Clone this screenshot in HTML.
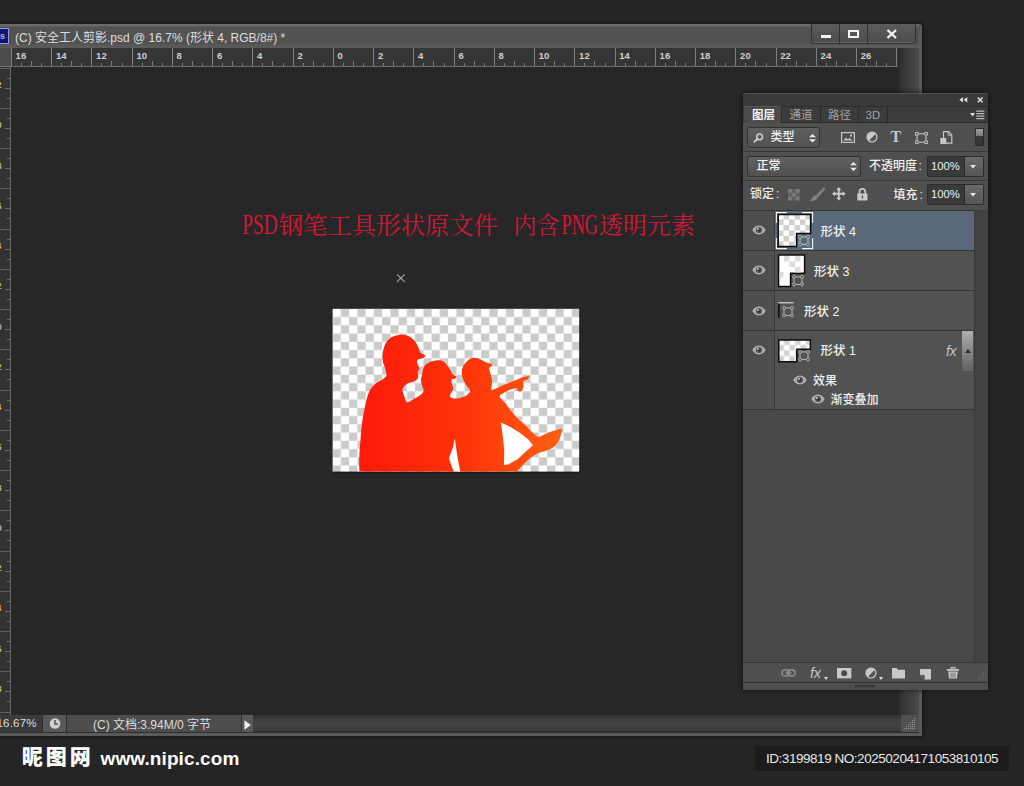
<!DOCTYPE html>
<html lang="zh-CN">
<head>
<meta charset="utf-8">
<title>安全工人剪影</title>
<style>
*{box-sizing:border-box;margin:0;padding:0}
html,body{width:1024px;height:786px;overflow:hidden;background:#252525}
body{position:relative;font-family:"Liberation Sans","Noto Sans CJK SC",sans-serif;font-size:12px;color:#dcdcdc}
.abs{position:absolute}
.t{position:absolute;white-space:nowrap;line-height:1}
svg{position:absolute;overflow:visible}
/* window */
#win{left:-4px;top:23.5px;width:926.3px;height:712.5px;background:#5a5a5a;border-radius:0 3px 0 0;box-shadow:0 0 4px 1px rgba(0,0,0,.5)}
#titlebar{left:0;top:23.5px;width:919px;height:24.5px;background:linear-gradient(#6a6a6a 0,#6a6a6a 2px,#525252 2.8px,#525252 20px,#5a5a5a 21px,#5a5a5a 100%)}
#canvas{left:11px;top:67px;width:887px;height:648px;background:#272727}
#hruler{left:0;top:48px;width:898px;height:19px;background:#353535;border-bottom:1px solid #6e6e6e;overflow:hidden}
#vruler{left:0;top:67px;width:11px;height:648px;background:#333;border-right:1px solid #666;overflow:hidden}
#rcorner{left:0;top:48px;width:11px;height:18px;background:#4a4a4a}
#vscroll{left:898px;top:48px;width:21px;height:667px;background:linear-gradient(90deg,#2c2c2c,#3a3a3a 40%,#4a4a4a)}
#status{left:0;top:715px;width:919px;height:18px;background:#3c3c3c;border-bottom:1px solid #2e2e2e}
/* panel */
#panel{left:743px;top:93px;width:245px;height:597px;background:#484848;border-radius:3px 3px 0 0}
</style>
</head>
<body>
<div id="win" class="abs"></div>
<div id="titlebar" class="abs"></div>
<div id="vscroll" class="abs"></div>
<div id="canvas" class="abs"></div>
<div id="hruler" class="abs"><i class="abs" style="left:10.8px;top:0;width:1px;height:19px;background:#7e7e7e"></i><span class="t" style="left:15.6px;top:2.8px;font-size:9.5px;font-weight:bold;color:#d0d0d0">16</span><i class="abs" style="left:20.9px;top:15px;width:1px;height:3px;background:#7c7c7c"></i><i class="abs" style="left:30.9px;top:13px;width:1px;height:5px;background:#7c7c7c"></i><i class="abs" style="left:41.0px;top:15px;width:1px;height:3px;background:#7c7c7c"></i><i class="abs" style="left:51.1px;top:0;width:1px;height:19px;background:#7e7e7e"></i><span class="t" style="left:55.9px;top:2.8px;font-size:9.5px;font-weight:bold;color:#d0d0d0">14</span><i class="abs" style="left:61.1px;top:15px;width:1px;height:3px;background:#7c7c7c"></i><i class="abs" style="left:71.2px;top:13px;width:1px;height:5px;background:#7c7c7c"></i><i class="abs" style="left:81.2px;top:15px;width:1px;height:3px;background:#7c7c7c"></i><i class="abs" style="left:91.3px;top:0;width:1px;height:19px;background:#7e7e7e"></i><span class="t" style="left:96.1px;top:2.8px;font-size:9.5px;font-weight:bold;color:#d0d0d0">12</span><i class="abs" style="left:101.4px;top:15px;width:1px;height:3px;background:#7c7c7c"></i><i class="abs" style="left:111.4px;top:13px;width:1px;height:5px;background:#7c7c7c"></i><i class="abs" style="left:121.5px;top:15px;width:1px;height:3px;background:#7c7c7c"></i><i class="abs" style="left:131.6px;top:0;width:1px;height:19px;background:#7e7e7e"></i><span class="t" style="left:136.4px;top:2.8px;font-size:9.5px;font-weight:bold;color:#d0d0d0">10</span><i class="abs" style="left:141.6px;top:15px;width:1px;height:3px;background:#7c7c7c"></i><i class="abs" style="left:151.7px;top:13px;width:1px;height:5px;background:#7c7c7c"></i><i class="abs" style="left:161.7px;top:15px;width:1px;height:3px;background:#7c7c7c"></i><i class="abs" style="left:171.8px;top:0;width:1px;height:19px;background:#7e7e7e"></i><span class="t" style="left:176.6px;top:2.8px;font-size:9.5px;font-weight:bold;color:#d0d0d0">8</span><i class="abs" style="left:181.9px;top:15px;width:1px;height:3px;background:#7c7c7c"></i><i class="abs" style="left:191.9px;top:13px;width:1px;height:5px;background:#7c7c7c"></i><i class="abs" style="left:202.0px;top:15px;width:1px;height:3px;background:#7c7c7c"></i><i class="abs" style="left:212.1px;top:0;width:1px;height:19px;background:#7e7e7e"></i><span class="t" style="left:216.9px;top:2.8px;font-size:9.5px;font-weight:bold;color:#d0d0d0">6</span><i class="abs" style="left:222.1px;top:15px;width:1px;height:3px;background:#7c7c7c"></i><i class="abs" style="left:232.2px;top:13px;width:1px;height:5px;background:#7c7c7c"></i><i class="abs" style="left:242.2px;top:15px;width:1px;height:3px;background:#7c7c7c"></i><i class="abs" style="left:252.3px;top:0;width:1px;height:19px;background:#7e7e7e"></i><span class="t" style="left:257.1px;top:2.8px;font-size:9.5px;font-weight:bold;color:#d0d0d0">4</span><i class="abs" style="left:262.4px;top:15px;width:1px;height:3px;background:#7c7c7c"></i><i class="abs" style="left:272.4px;top:13px;width:1px;height:5px;background:#7c7c7c"></i><i class="abs" style="left:282.5px;top:15px;width:1px;height:3px;background:#7c7c7c"></i><i class="abs" style="left:292.6px;top:0;width:1px;height:19px;background:#7e7e7e"></i><span class="t" style="left:297.4px;top:2.8px;font-size:9.5px;font-weight:bold;color:#d0d0d0">2</span><i class="abs" style="left:302.6px;top:15px;width:1px;height:3px;background:#7c7c7c"></i><i class="abs" style="left:312.7px;top:13px;width:1px;height:5px;background:#7c7c7c"></i><i class="abs" style="left:322.7px;top:15px;width:1px;height:3px;background:#7c7c7c"></i><i class="abs" style="left:332.8px;top:0;width:1px;height:19px;background:#7e7e7e"></i><span class="t" style="left:337.6px;top:2.8px;font-size:9.5px;font-weight:bold;color:#d0d0d0">0</span><i class="abs" style="left:342.9px;top:15px;width:1px;height:3px;background:#7c7c7c"></i><i class="abs" style="left:352.9px;top:13px;width:1px;height:5px;background:#7c7c7c"></i><i class="abs" style="left:363.0px;top:15px;width:1px;height:3px;background:#7c7c7c"></i><i class="abs" style="left:373.1px;top:0;width:1px;height:19px;background:#7e7e7e"></i><span class="t" style="left:377.9px;top:2.8px;font-size:9.5px;font-weight:bold;color:#d0d0d0">2</span><i class="abs" style="left:383.1px;top:15px;width:1px;height:3px;background:#7c7c7c"></i><i class="abs" style="left:393.2px;top:13px;width:1px;height:5px;background:#7c7c7c"></i><i class="abs" style="left:403.2px;top:15px;width:1px;height:3px;background:#7c7c7c"></i><i class="abs" style="left:413.3px;top:0;width:1px;height:19px;background:#7e7e7e"></i><span class="t" style="left:418.1px;top:2.8px;font-size:9.5px;font-weight:bold;color:#d0d0d0">4</span><i class="abs" style="left:423.4px;top:15px;width:1px;height:3px;background:#7c7c7c"></i><i class="abs" style="left:433.4px;top:13px;width:1px;height:5px;background:#7c7c7c"></i><i class="abs" style="left:443.5px;top:15px;width:1px;height:3px;background:#7c7c7c"></i><i class="abs" style="left:453.6px;top:0;width:1px;height:19px;background:#7e7e7e"></i><span class="t" style="left:458.4px;top:2.8px;font-size:9.5px;font-weight:bold;color:#d0d0d0">6</span><i class="abs" style="left:463.6px;top:15px;width:1px;height:3px;background:#7c7c7c"></i><i class="abs" style="left:473.7px;top:13px;width:1px;height:5px;background:#7c7c7c"></i><i class="abs" style="left:483.7px;top:15px;width:1px;height:3px;background:#7c7c7c"></i><i class="abs" style="left:493.8px;top:0;width:1px;height:19px;background:#7e7e7e"></i><span class="t" style="left:498.6px;top:2.8px;font-size:9.5px;font-weight:bold;color:#d0d0d0">8</span><i class="abs" style="left:503.9px;top:15px;width:1px;height:3px;background:#7c7c7c"></i><i class="abs" style="left:513.9px;top:13px;width:1px;height:5px;background:#7c7c7c"></i><i class="abs" style="left:524.0px;top:15px;width:1px;height:3px;background:#7c7c7c"></i><i class="abs" style="left:534.0px;top:0;width:1px;height:19px;background:#7e7e7e"></i><span class="t" style="left:538.8px;top:2.8px;font-size:9.5px;font-weight:bold;color:#d0d0d0">10</span><i class="abs" style="left:544.1px;top:15px;width:1px;height:3px;background:#7c7c7c"></i><i class="abs" style="left:554.2px;top:13px;width:1px;height:5px;background:#7c7c7c"></i><i class="abs" style="left:564.2px;top:15px;width:1px;height:3px;background:#7c7c7c"></i><i class="abs" style="left:574.3px;top:0;width:1px;height:19px;background:#7e7e7e"></i><span class="t" style="left:579.1px;top:2.8px;font-size:9.5px;font-weight:bold;color:#d0d0d0">12</span><i class="abs" style="left:584.4px;top:15px;width:1px;height:3px;background:#7c7c7c"></i><i class="abs" style="left:594.4px;top:13px;width:1px;height:5px;background:#7c7c7c"></i><i class="abs" style="left:604.5px;top:15px;width:1px;height:3px;background:#7c7c7c"></i><i class="abs" style="left:614.5px;top:0;width:1px;height:19px;background:#7e7e7e"></i><span class="t" style="left:619.3px;top:2.8px;font-size:9.5px;font-weight:bold;color:#d0d0d0">14</span><i class="abs" style="left:624.6px;top:15px;width:1px;height:3px;background:#7c7c7c"></i><i class="abs" style="left:634.7px;top:13px;width:1px;height:5px;background:#7c7c7c"></i><i class="abs" style="left:644.7px;top:15px;width:1px;height:3px;background:#7c7c7c"></i><i class="abs" style="left:654.8px;top:0;width:1px;height:19px;background:#7e7e7e"></i><span class="t" style="left:659.6px;top:2.8px;font-size:9.5px;font-weight:bold;color:#d0d0d0">16</span><i class="abs" style="left:664.9px;top:15px;width:1px;height:3px;background:#7c7c7c"></i><i class="abs" style="left:674.9px;top:13px;width:1px;height:5px;background:#7c7c7c"></i><i class="abs" style="left:685.0px;top:15px;width:1px;height:3px;background:#7c7c7c"></i><i class="abs" style="left:695.0px;top:0;width:1px;height:19px;background:#7e7e7e"></i><span class="t" style="left:699.8px;top:2.8px;font-size:9.5px;font-weight:bold;color:#d0d0d0">18</span><i class="abs" style="left:705.1px;top:15px;width:1px;height:3px;background:#7c7c7c"></i><i class="abs" style="left:715.2px;top:13px;width:1px;height:5px;background:#7c7c7c"></i><i class="abs" style="left:725.2px;top:15px;width:1px;height:3px;background:#7c7c7c"></i><i class="abs" style="left:735.3px;top:0;width:1px;height:19px;background:#7e7e7e"></i><span class="t" style="left:740.1px;top:2.8px;font-size:9.5px;font-weight:bold;color:#d0d0d0">20</span><i class="abs" style="left:745.4px;top:15px;width:1px;height:3px;background:#7c7c7c"></i><i class="abs" style="left:755.4px;top:13px;width:1px;height:5px;background:#7c7c7c"></i><i class="abs" style="left:765.5px;top:15px;width:1px;height:3px;background:#7c7c7c"></i><i class="abs" style="left:775.5px;top:0;width:1px;height:19px;background:#7e7e7e"></i><span class="t" style="left:780.3px;top:2.8px;font-size:9.5px;font-weight:bold;color:#d0d0d0">22</span><i class="abs" style="left:785.6px;top:15px;width:1px;height:3px;background:#7c7c7c"></i><i class="abs" style="left:795.7px;top:13px;width:1px;height:5px;background:#7c7c7c"></i><i class="abs" style="left:805.7px;top:15px;width:1px;height:3px;background:#7c7c7c"></i><i class="abs" style="left:815.8px;top:0;width:1px;height:19px;background:#7e7e7e"></i><span class="t" style="left:820.6px;top:2.8px;font-size:9.5px;font-weight:bold;color:#d0d0d0">24</span><i class="abs" style="left:825.9px;top:15px;width:1px;height:3px;background:#7c7c7c"></i><i class="abs" style="left:835.9px;top:13px;width:1px;height:5px;background:#7c7c7c"></i><i class="abs" style="left:846.0px;top:15px;width:1px;height:3px;background:#7c7c7c"></i><i class="abs" style="left:856.0px;top:0;width:1px;height:19px;background:#7e7e7e"></i><span class="t" style="left:860.8px;top:2.8px;font-size:9.5px;font-weight:bold;color:#d0d0d0">26</span><i class="abs" style="left:866.1px;top:15px;width:1px;height:3px;background:#7c7c7c"></i><i class="abs" style="left:876.2px;top:13px;width:1px;height:5px;background:#7c7c7c"></i><i class="abs" style="left:886.2px;top:15px;width:1px;height:3px;background:#7c7c7c"></i><i class="abs" style="left:896.3px;top:0;width:1px;height:19px;background:#7e7e7e"></i><span class="t" style="left:901.1px;top:2.8px;font-size:9.5px;font-weight:bold;color:#d0d0d0">28</span></div>
<div id="vruler" class="abs"><i class="abs" style="left:0;top:0.5px;width:11px;height:1px;background:#626262"></i><span class="t" style="right:8.5px;top:14.0px;font-size:9px;color:#e8e0c0">12</span><i class="abs" style="left:7px;top:10.6px;width:3px;height:1px;background:#6a6a6a"></i><i class="abs" style="left:5px;top:20.6px;width:5px;height:1px;background:#6a6a6a"></i><i class="abs" style="left:7px;top:30.7px;width:3px;height:1px;background:#6a6a6a"></i><i class="abs" style="left:0;top:40.8px;width:11px;height:1px;background:#626262"></i><span class="t" style="right:8.5px;top:54.2px;font-size:9px;color:#e8e0c0">10</span><i class="abs" style="left:7px;top:50.8px;width:3px;height:1px;background:#6a6a6a"></i><i class="abs" style="left:5px;top:60.9px;width:5px;height:1px;background:#6a6a6a"></i><i class="abs" style="left:7px;top:70.9px;width:3px;height:1px;background:#6a6a6a"></i><i class="abs" style="left:0;top:81.0px;width:11px;height:1px;background:#626262"></i><span class="t" style="right:8.5px;top:94.5px;font-size:9px;color:#e8e0c0">8</span><i class="abs" style="left:7px;top:91.1px;width:3px;height:1px;background:#6a6a6a"></i><i class="abs" style="left:5px;top:101.1px;width:5px;height:1px;background:#6a6a6a"></i><i class="abs" style="left:7px;top:111.2px;width:3px;height:1px;background:#6a6a6a"></i><i class="abs" style="left:0;top:121.2px;width:11px;height:1px;background:#626262"></i><span class="t" style="right:8.5px;top:134.8px;font-size:9px;color:#e8e0c0">6</span><i class="abs" style="left:7px;top:131.3px;width:3px;height:1px;background:#6a6a6a"></i><i class="abs" style="left:5px;top:141.4px;width:5px;height:1px;background:#6a6a6a"></i><i class="abs" style="left:7px;top:151.4px;width:3px;height:1px;background:#6a6a6a"></i><i class="abs" style="left:0;top:161.5px;width:11px;height:1px;background:#626262"></i><span class="t" style="right:8.5px;top:175.0px;font-size:9px;color:#e8e0c0">4</span><i class="abs" style="left:7px;top:171.6px;width:3px;height:1px;background:#6a6a6a"></i><i class="abs" style="left:5px;top:181.6px;width:5px;height:1px;background:#6a6a6a"></i><i class="abs" style="left:7px;top:191.7px;width:3px;height:1px;background:#6a6a6a"></i><i class="abs" style="left:0;top:201.8px;width:11px;height:1px;background:#626262"></i><span class="t" style="right:8.5px;top:215.2px;font-size:9px;color:#e8e0c0">2</span><i class="abs" style="left:7px;top:211.8px;width:3px;height:1px;background:#6a6a6a"></i><i class="abs" style="left:5px;top:221.9px;width:5px;height:1px;background:#6a6a6a"></i><i class="abs" style="left:7px;top:231.9px;width:3px;height:1px;background:#6a6a6a"></i><i class="abs" style="left:0;top:242.0px;width:11px;height:1px;background:#626262"></i><span class="t" style="right:8.5px;top:255.5px;font-size:9px;color:#e8e0c0">0</span><i class="abs" style="left:7px;top:252.1px;width:3px;height:1px;background:#6a6a6a"></i><i class="abs" style="left:5px;top:262.1px;width:5px;height:1px;background:#6a6a6a"></i><i class="abs" style="left:7px;top:272.2px;width:3px;height:1px;background:#6a6a6a"></i><i class="abs" style="left:0;top:282.2px;width:11px;height:1px;background:#626262"></i><span class="t" style="right:8.5px;top:295.8px;font-size:9px;color:#e8e0c0">2</span><i class="abs" style="left:7px;top:292.3px;width:3px;height:1px;background:#6a6a6a"></i><i class="abs" style="left:5px;top:302.4px;width:5px;height:1px;background:#6a6a6a"></i><i class="abs" style="left:7px;top:312.4px;width:3px;height:1px;background:#6a6a6a"></i><i class="abs" style="left:0;top:322.5px;width:11px;height:1px;background:#626262"></i><span class="t" style="right:8.5px;top:336.0px;font-size:9px;color:#e8e0c0">4</span><i class="abs" style="left:7px;top:332.6px;width:3px;height:1px;background:#6a6a6a"></i><i class="abs" style="left:5px;top:342.6px;width:5px;height:1px;background:#6a6a6a"></i><i class="abs" style="left:7px;top:352.7px;width:3px;height:1px;background:#6a6a6a"></i><i class="abs" style="left:0;top:362.8px;width:11px;height:1px;background:#626262"></i><span class="t" style="right:8.5px;top:376.2px;font-size:9px;color:#e8e0c0">6</span><i class="abs" style="left:7px;top:372.8px;width:3px;height:1px;background:#6a6a6a"></i><i class="abs" style="left:5px;top:382.9px;width:5px;height:1px;background:#6a6a6a"></i><i class="abs" style="left:7px;top:392.9px;width:3px;height:1px;background:#6a6a6a"></i><i class="abs" style="left:0;top:403.0px;width:11px;height:1px;background:#626262"></i><span class="t" style="right:8.5px;top:416.5px;font-size:9px;color:#e8e0c0">8</span><i class="abs" style="left:7px;top:413.1px;width:3px;height:1px;background:#6a6a6a"></i><i class="abs" style="left:5px;top:423.1px;width:5px;height:1px;background:#6a6a6a"></i><i class="abs" style="left:7px;top:433.2px;width:3px;height:1px;background:#6a6a6a"></i><i class="abs" style="left:0;top:443.2px;width:11px;height:1px;background:#626262"></i><span class="t" style="right:8.5px;top:456.8px;font-size:9px;color:#e8e0c0">10</span><i class="abs" style="left:7px;top:453.3px;width:3px;height:1px;background:#6a6a6a"></i><i class="abs" style="left:5px;top:463.4px;width:5px;height:1px;background:#6a6a6a"></i><i class="abs" style="left:7px;top:473.4px;width:3px;height:1px;background:#6a6a6a"></i><i class="abs" style="left:0;top:483.5px;width:11px;height:1px;background:#626262"></i><span class="t" style="right:8.5px;top:497.0px;font-size:9px;color:#e8e0c0">12</span><i class="abs" style="left:7px;top:493.6px;width:3px;height:1px;background:#6a6a6a"></i><i class="abs" style="left:5px;top:503.6px;width:5px;height:1px;background:#6a6a6a"></i><i class="abs" style="left:7px;top:513.7px;width:3px;height:1px;background:#6a6a6a"></i><i class="abs" style="left:0;top:523.8px;width:11px;height:1px;background:#626262"></i><span class="t" style="right:8.5px;top:537.2px;font-size:9px;color:#e8e0c0">14</span><i class="abs" style="left:7px;top:533.8px;width:3px;height:1px;background:#6a6a6a"></i><i class="abs" style="left:5px;top:543.9px;width:5px;height:1px;background:#6a6a6a"></i><i class="abs" style="left:7px;top:553.9px;width:3px;height:1px;background:#6a6a6a"></i><i class="abs" style="left:0;top:564.0px;width:11px;height:1px;background:#626262"></i><span class="t" style="right:8.5px;top:577.5px;font-size:9px;color:#e8e0c0">16</span><i class="abs" style="left:7px;top:574.1px;width:3px;height:1px;background:#6a6a6a"></i><i class="abs" style="left:5px;top:584.1px;width:5px;height:1px;background:#6a6a6a"></i><i class="abs" style="left:7px;top:594.2px;width:3px;height:1px;background:#6a6a6a"></i><i class="abs" style="left:0;top:604.2px;width:11px;height:1px;background:#626262"></i><span class="t" style="right:8.5px;top:617.8px;font-size:9px;color:#e8e0c0">18</span><i class="abs" style="left:7px;top:614.3px;width:3px;height:1px;background:#6a6a6a"></i><i class="abs" style="left:5px;top:624.4px;width:5px;height:1px;background:#6a6a6a"></i><i class="abs" style="left:7px;top:634.4px;width:3px;height:1px;background:#6a6a6a"></i><i class="abs" style="left:0;top:644.5px;width:11px;height:1px;background:#626262"></i><span class="t" style="right:8.5px;top:658.0px;font-size:9px;color:#e8e0c0">20</span></div>
<div id="rcorner" class="abs"></div>
<div class="abs" style="left:-9px;top:28px;width:18px;height:16px;background:#14146e;border:1px solid #8f9bd8;color:#aab4ee;font:bold 9px/15px 'Liberation Sans',sans-serif;text-align:right;padding-right:3px;overflow:hidden">Ps</div>
<span id="ttl" class="t" style="left:15px;top:32.3px;font-size:12px;color:#dedede">(C) 安全工人剪影.psd @ 16.7% (形状 4, RGB/8#) *</span>
<div class="abs" style="left:811px;top:23.6px;width:105px;height:20.6px;border:1px solid #303030;border-top:none;border-radius:0 0 4px 4px;background:linear-gradient(#5c5c5c,#4c4c4c);box-shadow:inset 0 -1px 0 #666"></div>
<i class="abs" style="left:839px;top:24px;width:1px;height:19px;background:#303030"></i><i class="abs" style="left:867px;top:24px;width:1px;height:19px;background:#303030"></i>
<i class="abs" style="left:821px;top:35px;width:10px;height:3px;background:#f2f2f2"></i>
<i class="abs" style="left:848px;top:30px;width:11px;height:8px;border:2px solid #f2f2f2"></i>
<svg style="left:886px;top:29px" width="12" height="10" viewBox="0 0 12 10"><path d="M1.5 1 L10 9 M10 1 L1.5 9" stroke="#f2f2f2" stroke-width="2.4" fill="none"/></svg>
<svg style="left:0;top:0" width="1024" height="786" viewBox="0 0 1024 786"><g font-family="'Liberation Serif','Noto Serif CJK SC',serif" font-size="24" fill="#d2183a" font-weight="400"><text x="242.3" y="234.3" font-size="28.5" textLength="35.5" lengthAdjust="spacingAndGlyphs">PSD</text><text x="278.7" y="234" textLength="219.5" lengthAdjust="spacingAndGlyphs">钢笔工具形状原文件</text><text x="513.5" y="234" textLength="46" lengthAdjust="spacingAndGlyphs">内含</text><text x="561.5" y="234.3" font-size="28.5" textLength="36.5" lengthAdjust="spacingAndGlyphs">PNG</text><text x="599" y="234" textLength="96" lengthAdjust="spacingAndGlyphs">透明元素</text></g><path d="M397 274.3 l7.6 7.6 M404.6 274.3 l-7.6 7.6" stroke="#a8a8a8" stroke-width="1.1" fill="none"/></svg>
<svg style="left:0;top:0" width="1024" height="786" viewBox="0 0 1024 786"><defs><pattern id="ck" x="332.6" y="308.8" width="16.5" height="16.5" patternUnits="userSpaceOnUse"><rect width="16.5" height="16.5" fill="#fff"/><rect x="8.25" width="8.25" height="8.25" fill="#cbcbcb"/><rect y="8.25" width="8.25" height="8.25" fill="#cbcbcb"/></pattern><linearGradient id="rg" gradientUnits="userSpaceOnUse" x1="360" y1="0" x2="565" y2="0"><stop offset="0" stop-color="#ff1a0c"/><stop offset="0.5" stop-color="#ff3208"/><stop offset="1" stop-color="#ff6214"/></linearGradient><clipPath id="pc"><rect x="332.6" y="308.8" width="246.6" height="162.8"/></clipPath></defs><rect x="333.6" y="310.8" width="246.6" height="162.8" fill="#1c1c1c"/><rect x="332.6" y="308.8" width="246.6" height="162.8" fill="url(#ck)"/><g clip-path="url(#pc)"><path d="M359.5 472.0C359.4 469.8 359.0 464.0 359.2 458.6C359.4 453.2 360.0 445.9 360.5 439.5C361.0 433.1 361.6 426.2 362.4 420.5C363.2 414.8 364.2 410.0 365.3 405.2C366.4 400.4 367.5 395.3 369.1 391.8C370.7 388.3 372.6 386.3 374.8 384.2C377.0 382.1 380.6 380.8 382.5 379.4C384.4 378.0 385.8 377.4 386.3 375.6C386.8 373.9 385.9 371.3 385.3 368.9C384.7 366.5 383.2 363.9 382.8 361.3C382.4 358.8 382.4 356.5 382.8 353.6C383.2 350.7 383.9 346.8 385.3 344.1C386.7 341.4 388.6 338.9 391.0 337.4C393.4 335.9 396.7 335.1 399.6 334.9C402.5 334.7 405.6 335.1 408.2 336.1C410.8 337.2 413.1 339.1 414.9 341.2C416.7 343.3 418.2 347.0 419.1 348.9C420.0 350.8 419.3 351.6 420.3 352.7C421.3 353.8 424.5 354.3 425.0 355.2C425.5 356.1 424.7 357.1 423.5 357.8C422.3 358.6 418.9 358.8 417.8 359.7C416.8 360.6 417.0 361.8 417.2 363.2C417.4 364.6 419.0 366.4 419.1 368.0C419.2 369.6 417.9 371.3 417.8 372.7C417.7 374.1 418.6 374.9 418.3 376.2C418.0 377.5 417.3 379.4 415.9 380.4C414.5 381.4 411.9 381.5 410.1 382.3C408.4 383.1 406.7 383.8 405.4 385.1C404.1 386.4 402.7 388.0 402.5 389.9C402.3 391.8 403.7 394.5 404.4 396.6C405.1 398.7 405.5 401.8 406.9 402.3C408.3 402.8 410.9 400.6 413.0 399.5C415.1 398.4 417.9 397.0 419.7 395.6C421.4 394.2 423.1 392.5 423.5 390.9C423.9 389.3 422.6 387.9 422.2 386.1C421.8 384.4 421.0 382.5 421.0 380.4C421.0 378.3 421.8 375.8 422.2 373.7C422.6 371.6 422.8 369.6 423.5 368.0C424.2 366.4 425.0 365.2 426.4 364.1C427.8 363.0 429.9 361.9 432.1 361.3C434.3 360.7 437.5 360.0 439.7 360.3C441.9 360.6 443.8 361.6 445.5 363.2C447.2 364.8 449.0 368.0 450.2 369.9C451.4 371.8 451.6 373.2 452.7 374.3C453.8 375.4 456.2 375.8 456.5 376.5C456.8 377.2 455.4 378.3 454.6 378.8C453.8 379.3 452.0 378.5 451.6 379.4C451.2 380.3 451.9 382.6 452.1 384.2C452.4 385.8 453.2 387.6 453.1 389.0C453.0 390.4 451.7 391.5 451.2 392.8C450.7 394.1 449.7 395.7 450.2 396.6C450.7 397.6 451.9 398.4 454.0 398.5C456.1 398.6 460.2 398.0 462.6 397.2C465.0 396.4 467.2 394.9 468.4 393.7C469.6 392.5 470.4 391.5 469.9 389.9C469.4 388.3 466.7 386.3 465.5 384.2C464.3 382.1 463.2 379.6 462.6 377.5C462.0 375.4 461.7 373.4 461.8 371.5C461.9 369.6 462.3 367.9 463.4 366.0C464.4 364.1 466.4 361.7 468.1 360.3C469.9 358.9 471.8 358.0 473.9 357.8C476.0 357.6 478.3 358.6 480.5 359.4C482.7 360.2 485.3 362.0 487.2 362.8C489.1 363.6 491.4 363.5 492.0 364.1C492.6 364.7 491.5 366.0 491.0 366.6C490.5 367.2 489.2 366.8 489.1 368.0C489.0 369.2 490.0 371.6 490.5 373.7C491.0 375.8 491.8 378.3 492.0 380.4C492.2 382.5 491.5 384.5 491.6 386.1C491.7 387.7 490.4 390.1 492.4 389.9C494.4 389.7 499.8 386.7 503.5 385.1C507.2 383.5 511.6 381.8 514.9 380.4C518.2 379.0 521.1 377.5 523.5 376.9C525.9 376.2 528.6 376.1 529.2 376.5C529.8 376.9 528.2 378.6 527.3 379.4C526.3 380.2 524.1 380.2 523.5 381.3C522.9 382.4 523.8 384.5 523.5 386.1C523.2 387.7 522.6 390.1 521.6 390.9C520.6 391.7 518.8 391.4 517.8 390.9C516.8 390.4 517.6 388.0 515.9 388.0C514.1 388.0 509.9 389.8 507.3 390.9C504.8 392.0 501.8 393.6 500.6 394.7C499.4 395.8 499.2 396.1 500.0 397.5C500.8 398.9 503.5 401.1 505.4 403.3C507.2 405.5 509.0 408.4 511.1 410.9C513.2 413.4 515.2 415.9 517.8 418.5C520.3 421.1 523.7 423.6 526.4 426.2C529.1 428.8 531.9 432.1 534.0 433.8C536.1 435.6 536.6 436.9 538.8 436.7C541.0 436.5 544.7 433.9 547.4 432.9C550.1 431.8 552.6 431.0 555.0 430.4C557.4 429.8 560.8 428.1 561.7 429.0C562.7 429.9 561.3 433.5 560.7 435.7C560.1 437.9 559.3 440.3 557.9 442.4C556.5 444.5 554.2 446.7 552.1 448.1C550.0 449.5 547.6 450.3 545.5 451.0C543.4 451.7 541.9 451.6 539.7 452.5C537.5 453.4 534.5 455.0 532.1 456.7C529.7 458.4 528.0 459.9 525.4 462.5C522.8 465.1 517.9 470.4 516.4 472.0Z" fill="url(#rg)"/><path d="M454.9 438 L453 447.3 L449 458.1 L451 464.4 L453.9 472 L460.3 472 L457.3 456.1 L455.6 444.4Z" fill="#fff"/><path d="M500.8 422.4 L502.3 432.7 L504.2 449.3 L504 464.9 L508.1 464.4 L517.9 459.1 L526.4 451 L533 445.3 L528.3 439.5 L518.7 431.9 L509.2 426.2Z" fill="#fff"/></g></svg>
<div id="status" class="abs"></div>
<div class="abs" style="left:253px;top:715px;width:648px;height:17px;background:linear-gradient(#303030,#3e3e3e 25%,#434343 50%,#3c3c3c 88%,#2e2e2e 100%)"></div>
<div class="abs" style="left:0;top:715px;width:42px;height:17px;background:#3b3b3b"></div>
<div class="abs" style="left:42px;top:715px;width:25px;height:17px;background:#585858;border-left:1px solid #2c2c2c;border-right:1px solid #2c2c2c"></div>
<div class="abs" style="left:67px;top:715px;width:174px;height:17px;background:#4d4d4d"></div>
<div class="abs" style="left:241px;top:715px;width:12px;height:17px;background:#5a5a5a;border-left:1px solid #333"></div>
<span class="t" style="left:-3.5px;top:718px;font-size:11.5px;letter-spacing:0.2px;color:#dcdcdc">16.67%</span>
<svg style="left:48px;top:717px" width="14" height="13" viewBox="0 0 14 13"><circle cx="7" cy="6.5" r="5.3" fill="#d0d0d0"/><path d="M7 3v4h3" stroke="#555" stroke-width="1.6" fill="none"/></svg>
<span class="t" style="left:93px;top:719px;font-size:12px;color:#dcdcdc">(C) 文档:3.94M/0 字节</span>
<svg style="left:243.5px;top:719.5px" width="7" height="10" viewBox="0 0 7 10"><path d="M0.5 0.3 L6.8 5 L0.5 9.7z" fill="#f0f0f0"/></svg>
<div class="abs" style="left:901px;top:715px;width:18px;height:17px;background:#505050"></div>
<svg style="left:903px;top:717px" width="14" height="14" viewBox="0 0 14 14"><rect x="11" y="1" width="1.2" height="1.2" fill="#8a8a8a"/><rect x="9" y="3" width="1.2" height="1.2" fill="#8a8a8a"/><rect x="11" y="3" width="1.2" height="1.2" fill="#8a8a8a"/><rect x="7" y="5" width="1.2" height="1.2" fill="#8a8a8a"/><rect x="9" y="5" width="1.2" height="1.2" fill="#8a8a8a"/><rect x="11" y="5" width="1.2" height="1.2" fill="#8a8a8a"/><rect x="5" y="7" width="1.2" height="1.2" fill="#8a8a8a"/><rect x="7" y="7" width="1.2" height="1.2" fill="#8a8a8a"/><rect x="9" y="7" width="1.2" height="1.2" fill="#8a8a8a"/><rect x="11" y="7" width="1.2" height="1.2" fill="#8a8a8a"/><rect x="3" y="9" width="1.2" height="1.2" fill="#8a8a8a"/><rect x="5" y="9" width="1.2" height="1.2" fill="#8a8a8a"/><rect x="7" y="9" width="1.2" height="1.2" fill="#8a8a8a"/><rect x="9" y="9" width="1.2" height="1.2" fill="#8a8a8a"/><rect x="11" y="9" width="1.2" height="1.2" fill="#8a8a8a"/><rect x="1" y="11" width="1.2" height="1.2" fill="#8a8a8a"/><rect x="3" y="11" width="1.2" height="1.2" fill="#8a8a8a"/><rect x="5" y="11" width="1.2" height="1.2" fill="#8a8a8a"/><rect x="7" y="11" width="1.2" height="1.2" fill="#8a8a8a"/><rect x="9" y="11" width="1.2" height="1.2" fill="#8a8a8a"/><rect x="11" y="11" width="1.2" height="1.2" fill="#8a8a8a"/></svg>
<span class="t" style="left:21.8px;top:746.3px;font:900 21px/1 'Liberation Sans','Noto Sans CJK SC',sans-serif;color:#fff;letter-spacing:3px" id="logo">昵图网</span>
<span class="t" style="left:100.5px;top:749px;letter-spacing:0.1px;font:bold 19px/1 'Liberation Sans',sans-serif;color:#fff" id="url">www.nipic.com</span>
<div class="abs" style="left:755px;top:746px;width:254px;height:25px;background:#1c1c1c;border-radius:2px"></div>
<span class="t" style="left:766px;top:752px;font-size:13.5px;letter-spacing:-0.46px;color:#e8e8e8" id="idt">ID:3199819 NO:20250204171053810105</span>
<div class="abs" style="left:743px;top:93px;width:245px;height:597px;box-shadow:0 0 5px 1px rgba(0,0,0,.45);border-radius:3px"></div>
<div id="panel" class="abs"></div>
<div class="abs" style="left:743px;top:93px;width:245px;height:13px;background:#3a3a3a;border-top:1px solid #505050;border-radius:3px 3px 0 0"></div>
<svg style="left:959px;top:97px" width="26" height="6" viewBox="0 0 26 6"><path d="M4 0v5.6L0.3 2.8zM8.3 0v5.6L4.6 2.8z" fill="#d8d8d8"/><path d="M18.8 0.4l4.8 4.9M23.6 0.4l-4.8 4.9" stroke="#e4e4e4" stroke-width="1.4" fill="none"/></svg>
<div class="abs" style="left:743px;top:106px;width:245px;height:17px;background:#3c3c3c;border-top:1px solid #2c2c2c;border-bottom:1px solid #2c2c2c"></div>
<div class="abs" style="left:744px;top:106px;width:37px;height:17px;background:#4a4a4a;border-top:1px solid #585858"></div>
<i class="abs" style="left:781.0px;top:106px;width:1px;height:17px;background:#2a2a2a"></i><i class="abs" style="left:819.5px;top:106px;width:1px;height:17px;background:#2a2a2a"></i><i class="abs" style="left:857.5px;top:106px;width:1px;height:17px;background:#2a2a2a"></i><i class="abs" style="left:886.5px;top:106px;width:1px;height:17px;background:#2a2a2a"></i>
<span class="t" style="left:752px;top:109.5px;font-size:11.5px;font-weight:bold;color:#f4f4f4">图层</span><span class="t" style="left:789.5px;top:109.5px;font-size:11.5px;color:#a2a2a2">通道</span><span class="t" style="left:828px;top:109.5px;font-size:11.5px;color:#a2a2a2">路径</span><span class="t" style="left:865.5px;top:109.5px;font-size:11.5px;color:#a2a2a2">3D</span>
<svg style="left:970px;top:110px" width="15" height="10" viewBox="0 0 15 10"><path d="M0 3h5L2.5 6.6z" fill="#e0e0e0"/><path d="M6.3 1.2h8M6.3 3.7h8M6.3 6.2h8M6.3 8.7h8" stroke="#b8b8b8" stroke-width="1.3"/></svg>
<div class="abs" style="left:743px;top:123px;width:245px;height:87px;background:#4f4f4f"></div>
<i class="abs" style="left:743px;top:151px;width:245px;height:1px;background:#383838"></i><i class="abs" style="left:743px;top:152px;width:245px;height:1px;background:#525252"></i>
<div class="abs" style="left:747px;top:127px;width:73px;height:21px;border:1px solid #303030;border-radius:3px;background:linear-gradient(#606060,#515151);box-shadow:0 1px 0 #585858"></div>
<svg style="left:753px;top:133px" width="11" height="10" viewBox="0 0 11 10"><circle cx="6.6" cy="3.8" r="2.9" fill="none" stroke="#d0d0d0" stroke-width="1.5"/><path d="M4.4 6L0.8 9.4" stroke="#d0d0d0" stroke-width="1.8"/></svg>
<span class="t" style="left:770.5px;top:131px;font-size:12px;font-weight:500;color:#f4f4f4">类型</span>
<svg style="left:808.5px;top:133.5px" width="7" height="9" viewBox="0 0 7 9"><path d="M3.5 0L7 3.3H0zM3.5 8.6L7 5.3H0z" fill="#e8e8e8"/></svg>
<svg style="left:841px;top:132px" width="14" height="11" viewBox="0 0 14 11"><rect x="0.6" y="0.6" width="12.8" height="9.8" fill="none" stroke="#c6c6c6" stroke-width="1.2"/><path d="M2.5 8.5L5 5.5l2 2 1.5-1.5 3 2.5z" fill="#c6c6c6"/><rect x="9" y="2.5" width="2" height="2" fill="#c6c6c6"/></svg>
<svg style="left:866px;top:131px" width="12" height="12" viewBox="0 0 12 12"><circle cx="6" cy="6" r="5.2" fill="#c8c8c8"/><path d="M10 2.6A5.2 5.2 0 0 1 2.6 10z" fill="#555"/><circle cx="6" cy="6" r="5" fill="none" stroke="#c8c8c8" stroke-width="1.2"/></svg>
<span class="t" style="left:890.5px;top:128.5px;font:bold 16px/1 'Liberation Serif',serif;color:#c8c8c8">T</span>
<svg style="left:915px;top:131.5px" width="13" height="12" viewBox="0 0 13 12"><rect x="2" y="1.8" width="9" height="8.4" fill="none" stroke="#c6c6c6" stroke-width="1.1"/><g fill="#4a4a4a" stroke="#c6c6c6" stroke-width="0.9"><rect x="0.5" y="0.5" width="2.6" height="2.6"/><rect x="9.9" y="0.5" width="2.6" height="2.6"/><rect x="0.5" y="8.9" width="2.6" height="2.6"/><rect x="9.9" y="8.9" width="2.6" height="2.6"/></g></svg>
<svg style="left:940px;top:131px" width="13" height="14" viewBox="0 0 13 14"><path d="M3.5 0.6h5l3.3 3.3v8.3H3.5z" fill="none" stroke="#c6c6c6" stroke-width="1.2"/><path d="M8.2 0.6v3.6h3.6" fill="none" stroke="#c6c6c6" stroke-width="1"/><rect x="0.3" y="7" width="6" height="6" fill="#c6c6c6"/></svg>
<div class="abs" style="left:975px;top:128px;width:9px;height:18px;border:1px solid #2c2c2c;border-radius:1px;background:linear-gradient(#9c9c9c 0,#7a7a7a 45%,#3a3a3a 46%,#333 100%)"></div>
<div class="abs" style="left:747px;top:155.5px;width:113.5px;height:21px;border:1px solid #303030;border-radius:3px;background:linear-gradient(#606060,#515151);box-shadow:0 1px 0 #585858"></div>
<span class="t" style="left:756.5px;top:160px;font-size:12px;font-weight:500;color:#f4f4f4">正常</span>
<svg style="left:849.5px;top:161.5px" width="7" height="9" viewBox="0 0 7 9"><path d="M3.5 0L7 3.3H0zM3.5 9L7 5.7H0z" fill="#e8e8e8"/></svg>
<span class="t" style="left:869px;top:160.2px;font-size:12px;font-weight:500;color:#f0f0f0" id="opac">不透明度<b style="font-weight:normal;margin-left:1.5px">:</b></span>
<div class="abs" style="left:927px;top:156.0px;width:57px;height:21px;border:1px solid #2c2c2c;border-radius:2px;background:#3a3a3a"></div><div class="abs" style="left:963.5px;top:157.0px;width:19.5px;height:19px;border-left:1px solid #2c2c2c;background:linear-gradient(#6a6a6a,#555)"></div><svg style="left:970.3px;top:165.0px" width="6" height="3.5" viewBox="0 0 7 4"><path d="M0 0h7L3.5 4z" fill="#e8e8e8"/></svg><span class="t" style="left:931px;top:160.5px;font-size:11.3px;color:#f0f0f0">100%</span>
<div class="abs" style="left:927px;top:184.4px;width:57px;height:21px;border:1px solid #2c2c2c;border-radius:2px;background:#3a3a3a"></div><div class="abs" style="left:963.5px;top:185.4px;width:19.5px;height:19px;border-left:1px solid #2c2c2c;background:linear-gradient(#6a6a6a,#555)"></div><svg style="left:970.3px;top:193.4px" width="6" height="3.5" viewBox="0 0 7 4"><path d="M0 0h7L3.5 4z" fill="#e8e8e8"/></svg><span class="t" style="left:931px;top:188.9px;font-size:11.3px;color:#f0f0f0">100%</span>
<i class="abs" style="left:743px;top:179.5px;width:245px;height:1px;background:#383838"></i><i class="abs" style="left:743px;top:180.5px;width:245px;height:1px;background:#525252"></i>
<span class="t" style="left:750px;top:188px;font-size:12px;font-weight:500;color:#f0f0f0" id="lockt">锁定<b style="font-weight:normal;margin-left:2px">:</b></span>
<svg style="left:788px;top:189.3px" width="11.5" height="11.5" viewBox="0 0 12 12"><rect width="12" height="12" fill="#606060"/><rect x="0" y="0" width="4" height="4" fill="#7c7c7c"/><rect x="8" y="0" width="4" height="4" fill="#7c7c7c"/><rect x="4" y="4" width="4" height="4" fill="#7c7c7c"/><rect x="0" y="8" width="4" height="4" fill="#7c7c7c"/><rect x="8" y="8" width="4" height="4" fill="#7c7c7c"/></svg>
<svg style="left:808px;top:187px" width="18" height="15" viewBox="0 0 18 15"><path d="M16 0.2l1.5 1.3L10 10.2 7.8 8.4z" fill="#868686"/><path d="M7.4 8.6l2.4 2c-1 2.6-4.6 4-9.4 3.4 2.8-0.8 3.6-2 4.2-3.6 0.6-1.4 1.6-2 2.8-1.8z" fill="#868686"/></svg>
<svg style="left:832px;top:187.3px" width="13.6" height="13.6" viewBox="0 0 14 14"><path d="M7 0l2.6 3H8v3h3V4.4L14 7l-3 2.6V8H8v3h1.6L7 14l-2.6-3H6V8H3v1.6L0 7l3-2.6V6h3V3H4.4z" fill="#cacaca"/></svg>
<svg style="left:856.5px;top:188.2px" width="10.8" height="12.8" viewBox="0 0 11 13"><path d="M2.6 6V3.8a2.9 2.9 0 0 1 5.8 0V6" fill="none" stroke="#cacaca" stroke-width="1.7"/><rect x="0.3" y="5.6" width="10.4" height="7.2" rx="0.8" fill="#cacaca"/><rect x="4.9" y="7.6" width="1.3" height="3" fill="#4a4a4a"/></svg>
<span class="t" style="left:893.5px;top:188.7px;font-size:12px;font-weight:500;color:#f0f0f0" id="fillt">填充<b style="font-weight:normal;margin-left:2px">:</b></span>
<i class="abs" style="left:743px;top:209.5px;width:245px;height:1px;background:#333"></i>
<div class="abs" style="left:973.5px;top:210px;width:14.5px;height:452px;background:#424242;border-left:1px solid #3a3a3a"></div>
<div class="abs" style="left:743px;top:210px;width:230.5px;height:199.5px;background:#525252"></div>
<div class="abs" style="left:743px;top:210px;width:31px;height:199.5px;background:#4e4e4e"></div>
<div class="abs" style="left:774.5px;top:210.5px;width:199px;height:40px;background:#5a687b"></div>
<i class="abs" style="left:743px;top:209.8px;width:230.5px;height:1px;background:#343434"></i><i class="abs" style="left:743px;top:249.8px;width:230.5px;height:1px;background:#343434"></i><i class="abs" style="left:743px;top:290.0px;width:230.5px;height:1px;background:#343434"></i><i class="abs" style="left:743px;top:330.1px;width:230.5px;height:1px;background:#343434"></i><i class="abs" style="left:743px;top:409.2px;width:230.5px;height:1px;background:#343434"></i><i class="abs" style="left:774px;top:210px;width:1px;height:199px;background:#3a3a3a"></i>
<svg style="left:751.7px;top:225.4px" width="14" height="10" viewBox="0 0 14 10"><path d="M0.3 5C2.2 1.6 4.6 0.5 7 0.5s4.8 1.1 6.7 4.5C11.8 8.4 9.4 9.5 7 9.5S2.2 8.4 0.3 5z" fill="#adadad"/><ellipse cx="7" cy="5" rx="3.1" ry="3.1" fill="#555"/><circle cx="7" cy="5" r="1.5" fill="#333"/><circle cx="6" cy="3.9" r="0.9" fill="#ddd"/></svg><svg style="left:751.7px;top:265.3px" width="14" height="10" viewBox="0 0 14 10"><path d="M0.3 5C2.2 1.6 4.6 0.5 7 0.5s4.8 1.1 6.7 4.5C11.8 8.4 9.4 9.5 7 9.5S2.2 8.4 0.3 5z" fill="#adadad"/><ellipse cx="7" cy="5" rx="3.1" ry="3.1" fill="#555"/><circle cx="7" cy="5" r="1.5" fill="#333"/><circle cx="6" cy="3.9" r="0.9" fill="#ddd"/></svg><svg style="left:751.7px;top:305.5px" width="14" height="10" viewBox="0 0 14 10"><path d="M0.3 5C2.2 1.6 4.6 0.5 7 0.5s4.8 1.1 6.7 4.5C11.8 8.4 9.4 9.5 7 9.5S2.2 8.4 0.3 5z" fill="#adadad"/><ellipse cx="7" cy="5" rx="3.1" ry="3.1" fill="#555"/><circle cx="7" cy="5" r="1.5" fill="#333"/><circle cx="6" cy="3.9" r="0.9" fill="#ddd"/></svg><svg style="left:751.7px;top:345.0px" width="14" height="10" viewBox="0 0 14 10"><path d="M0.3 5C2.2 1.6 4.6 0.5 7 0.5s4.8 1.1 6.7 4.5C11.8 8.4 9.4 9.5 7 9.5S2.2 8.4 0.3 5z" fill="#adadad"/><ellipse cx="7" cy="5" rx="3.1" ry="3.1" fill="#555"/><circle cx="7" cy="5" r="1.5" fill="#333"/><circle cx="6" cy="3.9" r="0.9" fill="#ddd"/></svg><svg style="left:793.4px;top:375.1px" width="14" height="10" viewBox="0 0 14 10"><path d="M0.3 5C2.2 1.6 4.6 0.5 7 0.5s4.8 1.1 6.7 4.5C11.8 8.4 9.4 9.5 7 9.5S2.2 8.4 0.3 5z" fill="#adadad"/><ellipse cx="7" cy="5" rx="3.1" ry="3.1" fill="#555"/><circle cx="7" cy="5" r="1.5" fill="#333"/><circle cx="6" cy="3.9" r="0.9" fill="#ddd"/></svg><svg style="left:811.0px;top:393.7px" width="14" height="10" viewBox="0 0 14 10"><path d="M0.3 5C2.2 1.6 4.6 0.5 7 0.5s4.8 1.1 6.7 4.5C11.8 8.4 9.4 9.5 7 9.5S2.2 8.4 0.3 5z" fill="#adadad"/><ellipse cx="7" cy="5" rx="3.1" ry="3.1" fill="#555"/><circle cx="7" cy="5" r="1.5" fill="#333"/><circle cx="6" cy="3.9" r="0.9" fill="#ddd"/></svg>
<svg style="left:0;top:0" width="1024" height="786" viewBox="0 0 1024 786"><defs><pattern id="ck2" x="778" y="214" width="11" height="11" patternUnits="userSpaceOnUse"><rect width="11" height="11" fill="#fff"/><rect x="5.5" width="5.5" height="5.5" fill="#d0d0d0"/><rect y="5.5" width="5.5" height="5.5" fill="#d0d0d0"/></pattern><pattern id="ck3" x="778.5" y="339.5" width="11" height="11" patternUnits="userSpaceOnUse"><rect width="11" height="11" fill="#fff"/><rect x="5.5" width="5.5" height="5.5" fill="#d0d0d0"/><rect y="5.5" width="5.5" height="5.5" fill="#d0d0d0"/></pattern></defs><path d="M776.4 212.1v11.0M775.9 212.6h11.0 M812.6 212.1v11.0M813.1 212.6h-11.0 M776.4 249.1v-11.0M775.9 248.6h11.0 M812.6 249.1v-11.0M813.1 248.6h-11.0" stroke="#f4f4f4" stroke-width="1.1" fill="none"/><path d="M778.2 214.4H810.6V233.4H796.6V246.4H778.2Z" fill="url(#ck2)" stroke="#0c0c0c" stroke-width="1.5" stroke-linejoin="miter"/><path d="M778.6 255.0H804.6V273.2H790.6V286.4H778.6Z" fill="#fff" stroke="#0c0c0c" stroke-width="1.5" stroke-linejoin="miter"/><g fill="#dcdcdc"><rect x="784" y="256" width="5.5" height="5.5"/><rect x="795" y="256" width="5.5" height="5.5"/><rect x="789.5" y="261.5" width="5.5" height="5.5"/><rect x="795" y="267" width="5.5" height="5.5"/><rect x="779.5" y="272" width="4" height="5.5"/></g><path d="M778.8 302.4V318" stroke="#0c0c0c" stroke-width="1.6" fill="none"/><path d="M778 302.8H793.6" stroke="#d8d8d8" stroke-width="1.2" fill="none"/><path d="M778.8 340.0H810.4V349.2H796.8V361.8H778.8Z" fill="url(#ck3)" stroke="#0c0c0c" stroke-width="1.5" stroke-linejoin="miter"/></svg>
<svg style="left:798.2px;top:235.2px" width="12.0" height="11.4" viewBox="0 0 12 11.4"><rect x="2" y="1.9" width="8" height="7.6" fill="none" stroke="#b4bcc6" stroke-width="1.1"/><g fill="#555" stroke="#b4bcc6" stroke-width="0.9"><circle cx="2" cy="1.9" r="1.5"/><circle cx="10" cy="1.9" r="1.5"/><circle cx="2" cy="9.5" r="1.5"/><circle cx="10" cy="9.5" r="1.5"/></g></svg><svg style="left:792.0px;top:274.8px" width="12.0" height="11.4" viewBox="0 0 12 11.4"><rect x="2" y="1.9" width="8" height="7.6" fill="none" stroke="#b0b0b0" stroke-width="1.1"/><g fill="#555" stroke="#b0b0b0" stroke-width="0.9"><circle cx="2" cy="1.9" r="1.5"/><circle cx="10" cy="1.9" r="1.5"/><circle cx="2" cy="9.5" r="1.5"/><circle cx="10" cy="9.5" r="1.5"/></g></svg><svg style="left:781.5px;top:306.0px" width="12.0" height="11.4" viewBox="0 0 12 11.4"><rect x="2" y="1.9" width="8" height="7.6" fill="none" stroke="#b0b0b0" stroke-width="1.1"/><g fill="#555" stroke="#b0b0b0" stroke-width="0.9"><circle cx="2" cy="1.9" r="1.5"/><circle cx="10" cy="1.9" r="1.5"/><circle cx="2" cy="9.5" r="1.5"/><circle cx="10" cy="9.5" r="1.5"/></g></svg><svg style="left:798.0px;top:350.2px" width="12.0" height="11.4" viewBox="0 0 12 11.4"><rect x="2" y="1.9" width="8" height="7.6" fill="none" stroke="#b0b0b0" stroke-width="1.1"/><g fill="#555" stroke="#b0b0b0" stroke-width="0.9"><circle cx="2" cy="1.9" r="1.5"/><circle cx="10" cy="1.9" r="1.5"/><circle cx="2" cy="9.5" r="1.5"/><circle cx="10" cy="9.5" r="1.5"/></g></svg>
<span class="t" style="left:820.5px;top:225.5px;font-size:12.5px;font-weight:500;color:#f2f2f2" id="l4">形状 4</span><span class="t" style="left:814px;top:265.5px;font-size:12.5px;font-weight:500;color:#f2f2f2">形状 3</span><span class="t" style="left:804px;top:305.5px;font-size:12.5px;font-weight:500;color:#f2f2f2">形状 2</span><span class="t" style="left:820.5px;top:345px;font-size:12.5px;font-weight:500;color:#f2f2f2">形状 1</span><span class="t" style="left:813px;top:375px;font-size:12px;font-weight:500;color:#f0f0f0">效果</span><span class="t" style="left:830.5px;top:394.2px;font-size:12px;font-weight:500;color:#f0f0f0" id="grad">渐变叠加</span>
<span class="t" style="left:946px;top:343.5px;font:italic 14px/1 'Liberation Sans',sans-serif;color:#c4c4c4;letter-spacing:-0.4px">fx</span>
<div class="abs" style="left:962px;top:331px;width:11px;height:39.5px;background:linear-gradient(#b0b0b0,#8a8a8a 45%,#626262);"></div><svg style="left:964.5px;top:348.5px" width="6" height="4" viewBox="0 0 6 4"><path d="M0 4h6L3 0z" fill="#2e2e2e"/></svg>
<div class="abs" style="left:743px;top:662px;width:245px;height:20.5px;background:#4f4f4f;border-top:1px solid #353535;border-bottom:1px solid #303030"></div>
<div class="abs" style="left:743px;top:682.5px;width:245px;height:7.5px;background:#4e4e4e"></div>
<svg style="left:780.5px;top:669px" width="15" height="8" viewBox="0 0 15 8"><rect x="0.9" y="0.9" width="7.6" height="6" rx="3" fill="none" stroke="#8a8a8a" stroke-width="1.6"/><rect x="6.5" y="0.9" width="7.6" height="6" rx="3" fill="none" stroke="#8a8a8a" stroke-width="1.6"/><rect x="4.6" y="3.1" width="5.8" height="1.7" fill="#8a8a8a"/></svg>
<span class="t" style="left:810px;top:666px;font:italic 14.5px/1 'Liberation Sans',sans-serif;color:#c4c4c4;letter-spacing:-0.3px">fx</span><svg style="left:824px;top:677px" width="4" height="3" viewBox="0 0 4 3"><path d="M0 0h4L2 3z" fill="#e0e0e0"/></svg>
<svg style="left:837px;top:668.3px" width="14.4" height="10.4" viewBox="0 0 14.4 10.4"><rect width="14.4" height="10.4" fill="#c8c8c8"/><circle cx="7.2" cy="5.2" r="3" fill="#4a4a4a"/></svg>
<svg style="left:865px;top:667.3px" width="12" height="12" viewBox="0 0 12 12"><circle cx="6" cy="6" r="5.2" fill="#c8c8c8"/><path d="M10 2.6A5.2 5.2 0 0 1 2.6 10z" fill="#555"/><circle cx="6" cy="6" r="5" fill="none" stroke="#c8c8c8" stroke-width="1.2"/></svg><svg style="left:878.8px;top:677px" width="4" height="3" viewBox="0 0 4 3"><path d="M0 0h4L2 3z" fill="#e0e0e0"/></svg>
<svg style="left:892px;top:667.5px" width="13" height="10.4" viewBox="0 0 13 10.4"><path d="M0 0h4.6l1.4 1.8H13v8.6H0z" fill="#c8c8c8"/></svg>
<svg style="left:920.4px;top:668.8px" width="11" height="10.4" viewBox="0 0 11 10.4"><path d="M0 0h11v10.4H4.2L0 6.4z" fill="#c8c8c8"/><path d="M0.4 6.8h3.6v3.4z" fill="#4c4c4c"/><path d="M0 6.4h4.2v4" fill="none" stroke="#4c4c4c" stroke-width="0.9"/></svg>
<svg style="left:947px;top:667.2px" width="12" height="11.6" viewBox="0 0 12 11.6"><path d="M4 0.3h4v1.8H4z" fill="none" stroke="#c8c8c8" stroke-width="1"/><rect x="0" y="2" width="12" height="1.8" fill="#c8c8c8"/><path d="M1.2 4.6h9.6l-0.8 7H2z" fill="#c8c8c8"/><path d="M4 5.6v5M6 5.6v5M8 5.6v5" stroke="#555" stroke-width="0.8"/></svg>
<svg style="left:977px;top:669.5px" width="10" height="10" viewBox="0 0 10 10"><rect x="8" y="0" width="1.1" height="1.1" fill="#6c6c6c"/><rect x="6" y="2" width="1.1" height="1.1" fill="#6c6c6c"/><rect x="8" y="2" width="1.1" height="1.1" fill="#6c6c6c"/><rect x="4" y="4" width="1.1" height="1.1" fill="#6c6c6c"/><rect x="6" y="4" width="1.1" height="1.1" fill="#6c6c6c"/><rect x="8" y="4" width="1.1" height="1.1" fill="#6c6c6c"/><rect x="2" y="6" width="1.1" height="1.1" fill="#6c6c6c"/><rect x="4" y="6" width="1.1" height="1.1" fill="#6c6c6c"/><rect x="6" y="6" width="1.1" height="1.1" fill="#6c6c6c"/><rect x="8" y="6" width="1.1" height="1.1" fill="#6c6c6c"/><rect x="0" y="8" width="1.1" height="1.1" fill="#6c6c6c"/><rect x="2" y="8" width="1.1" height="1.1" fill="#6c6c6c"/><rect x="4" y="8" width="1.1" height="1.1" fill="#6c6c6c"/><rect x="6" y="8" width="1.1" height="1.1" fill="#6c6c6c"/><rect x="8" y="8" width="1.1" height="1.1" fill="#6c6c6c"/></svg>
<svg style="left:855px;top:685px" width="21" height="3" viewBox="0 0 21 3"><rect x="0.0" y="0" width="1.1" height="2.4" fill="#2c2c2c"/><rect x="2.1" y="0" width="1.1" height="2.4" fill="#2c2c2c"/><rect x="4.2" y="0" width="1.1" height="2.4" fill="#2c2c2c"/><rect x="6.3" y="0" width="1.1" height="2.4" fill="#2c2c2c"/><rect x="8.4" y="0" width="1.1" height="2.4" fill="#2c2c2c"/><rect x="10.5" y="0" width="1.1" height="2.4" fill="#2c2c2c"/><rect x="12.6" y="0" width="1.1" height="2.4" fill="#2c2c2c"/><rect x="14.7" y="0" width="1.1" height="2.4" fill="#2c2c2c"/><rect x="16.8" y="0" width="1.1" height="2.4" fill="#2c2c2c"/><rect x="18.9" y="0" width="1.1" height="2.4" fill="#2c2c2c"/></svg>
</body>
</html>
